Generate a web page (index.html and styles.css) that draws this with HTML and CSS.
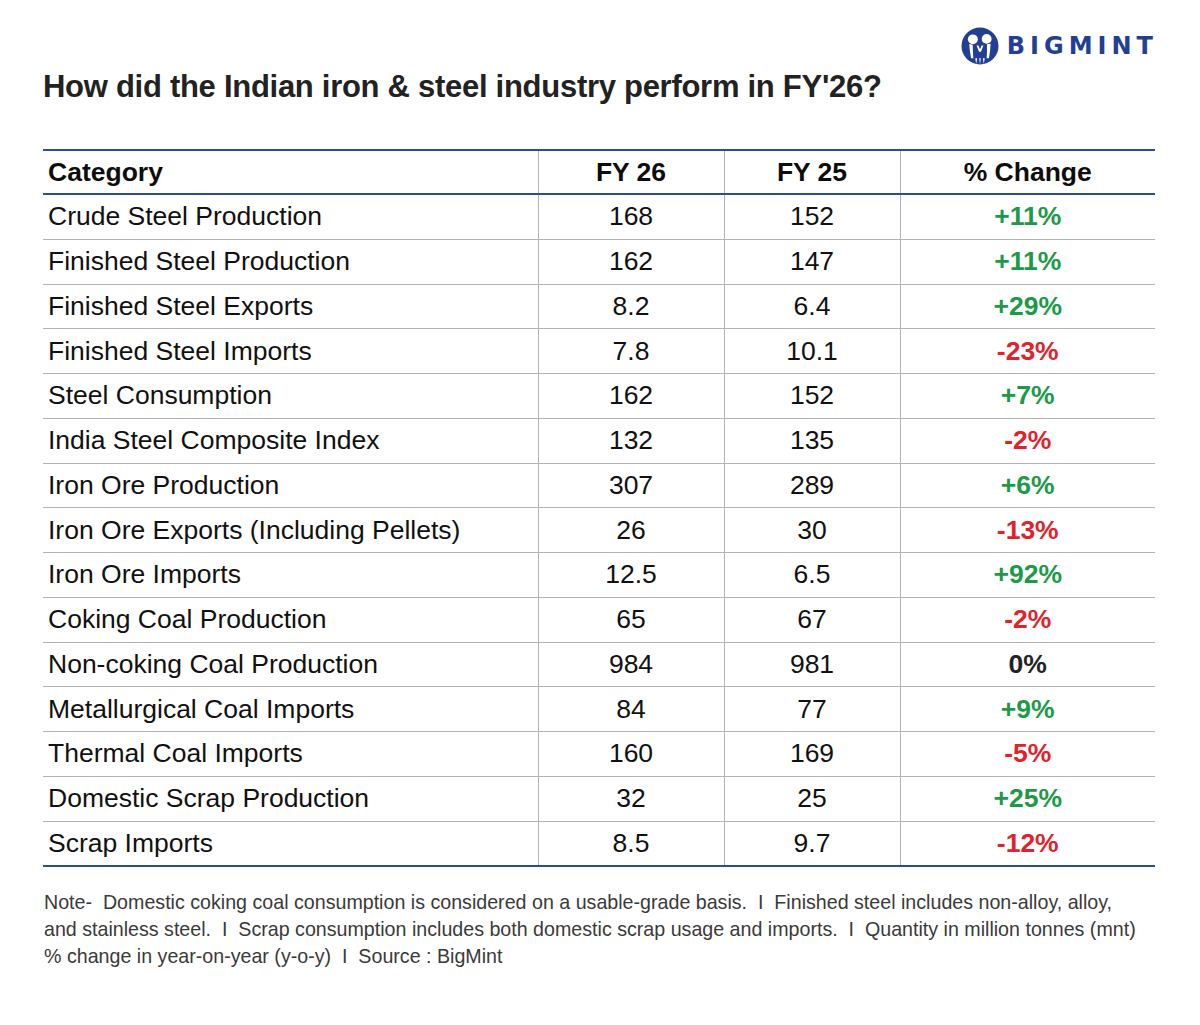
FILE: index.html
```html
<!DOCTYPE html>
<html lang="en">
<head>
<meta charset="utf-8">
<title>Indian iron &amp; steel industry FY'26</title>
<link rel="stylesheet" href="styles.css">
</head>
<body>
<div class="page">
  <div class="brand">
    <svg class="brand-icon" viewBox="0 0 40 40" width="38" height="38" aria-hidden="true">
      <circle cx="20" cy="20" r="19.5" fill="#233f94"/>
      <circle cx="12.5" cy="13" r="5.2" fill="#fff"/>
      <circle cx="27" cy="12.5" r="5.2" fill="#fff"/>
      <path d="M8.6 18 Q9.2 26 10.6 33 L13 33 Q12.4 25 12.3 18.6 Z" fill="#fff"/>
      <path d="M31.2 17.5 Q30.8 26 29.4 33 L27 33 Q27.6 25 27.3 18.2 Z" fill="#fff"/>
      <path d="M16.4 19.5 L18.4 19.5 L20 23.5 L21.6 19.5 L23.6 19.5 L21 26 L19 26 Z" fill="#fff"/>
      <path d="M15 33 L16 39 L17 33 Z M19.2 33 L20 39.5 L20.8 33 Z M23 33 L24 39 L25 33 Z" fill="#fff"/>
    </svg>
    <span class="brand-name">BIGMINT</span>
  </div>
  <h1 class="title">How did the Indian iron &amp; steel industry perform in FY'26?</h1>
  <table class="data">
    <colgroup>
      <col class="c-cat"><col class="c-a"><col class="c-b"><col class="c-chg">
    </colgroup>
    <thead>
      <tr><th class="cat">Category</th><th>FY 26</th><th>FY 25</th><th>% Change</th></tr>
    </thead>
    <tbody>
      <tr><td class="cat">Crude Steel Production</td><td>168</td><td>152</td><td class="up">+11%</td></tr>
      <tr><td class="cat">Finished Steel Production</td><td>162</td><td>147</td><td class="up">+11%</td></tr>
      <tr><td class="cat">Finished Steel Exports</td><td>8.2</td><td>6.4</td><td class="up">+29%</td></tr>
      <tr><td class="cat">Finished Steel Imports</td><td>7.8</td><td>10.1</td><td class="down">-23%</td></tr>
      <tr><td class="cat">Steel Consumption</td><td>162</td><td>152</td><td class="up">+7%</td></tr>
      <tr><td class="cat">India Steel Composite Index</td><td>132</td><td>135</td><td class="down">-2%</td></tr>
      <tr><td class="cat">Iron Ore Production</td><td>307</td><td>289</td><td class="up">+6%</td></tr>
      <tr><td class="cat">Iron Ore Exports (Including Pellets)</td><td>26</td><td>30</td><td class="down">-13%</td></tr>
      <tr><td class="cat">Iron Ore Imports</td><td>12.5</td><td>6.5</td><td class="up">+92%</td></tr>
      <tr><td class="cat">Coking Coal Production</td><td>65</td><td>67</td><td class="down">-2%</td></tr>
      <tr><td class="cat">Non-coking Coal Production</td><td>984</td><td>981</td><td class="flat">0%</td></tr>
      <tr><td class="cat">Metallurgical Coal Imports</td><td>84</td><td>77</td><td class="up">+9%</td></tr>
      <tr><td class="cat">Thermal Coal Imports</td><td>160</td><td>169</td><td class="down">-5%</td></tr>
      <tr><td class="cat">Domestic Scrap Production</td><td>32</td><td>25</td><td class="up">+25%</td></tr>
      <tr><td class="cat">Scrap Imports</td><td>8.5</td><td>9.7</td><td class="down">-12%</td></tr>
    </tbody>
  </table>
  <p class="note">Note-&nbsp; Domestic coking coal consumption is considered on a usable-grade basis.&nbsp; I&nbsp; Finished steel includes non-alloy, alloy,<br>and stainless steel.&nbsp; I&nbsp; Scrap consumption includes both domestic scrap usage and imports.&nbsp; I&nbsp; Quantity in million tonnes (mnt)<br>% change in year-on-year (y-o-y)&nbsp; I&nbsp; Source : BigMint</p>
</div>
</body>
</html>
```

FILE: styles.css
```css
html, body {
  margin: 0;
  padding: 0;
  background: #ffffff;
}

body {
  font-family: "Liberation Sans", Arial, sans-serif;
  color: #111111;
}

.page {
  width: 1112px;
  padding: 0 45px 0 43px;
}

.brand {
  display: flex;
  justify-content: flex-end;
  align-items: center;
  gap: 8px;
  padding-top: 26px;
  height: 39px;
}

.brand-icon {
  display: block;
}

.brand-name {
  font-family: "DejaVu Sans", sans-serif;
  font-weight: bold;
  font-size: 24px;
  letter-spacing: 5px;
  color: #233f94;
  margin-right: -3px;
}

.title {
  margin: 0;
  margin-top: 4px;
  font-size: 31px;
  line-height: 36px;
  font-weight: bold;
  color: #222222;
  letter-spacing: -0.28px;
}

.data {
  margin-top: 44px;
  width: 1112px;
  border-collapse: collapse;
  table-layout: fixed;
  border-top: 2px solid #2d4b9c;
  border-bottom: 2px solid #2d4b9c;
}

.c-cat { width: 495px; }
.c-a { width: 186px; }
.c-b { width: 176px; }
.c-chg { width: 255px; }

.data th,
.data td {
  padding: 0;
  text-align: center;
  font-size: 26.5px;
  border-left: 1.5px solid #b3b3b3;
}

.data th:first-child,
.data td:first-child {
  border-left: none;
}

.data th {
  height: 42px;
  font-weight: bold;
  color: #0d0d0d;
  border-bottom: 2px solid #2d4b9c;
}

.data td {
  height: 43.75px;
  color: #111111;
  border-top: 1.5px solid #b3b3b3;
}

.data tbody tr:first-child td {
  border-top: none;
}

.data .cat {
  text-align: left;
  padding-left: 5px;
}

.data td.up {
  color: #1b9a47;
  font-weight: bold;
}

.data td.down {
  color: #e2222b;
  font-weight: bold;
}

.data td.flat {
  color: #222222;
  font-weight: bold;
}

.note {
  margin: 22px 0 0 1px;
  font-size: 19.65px;
  line-height: 27px;
  color: #3a3a3a;
  white-space: nowrap;
}
```
